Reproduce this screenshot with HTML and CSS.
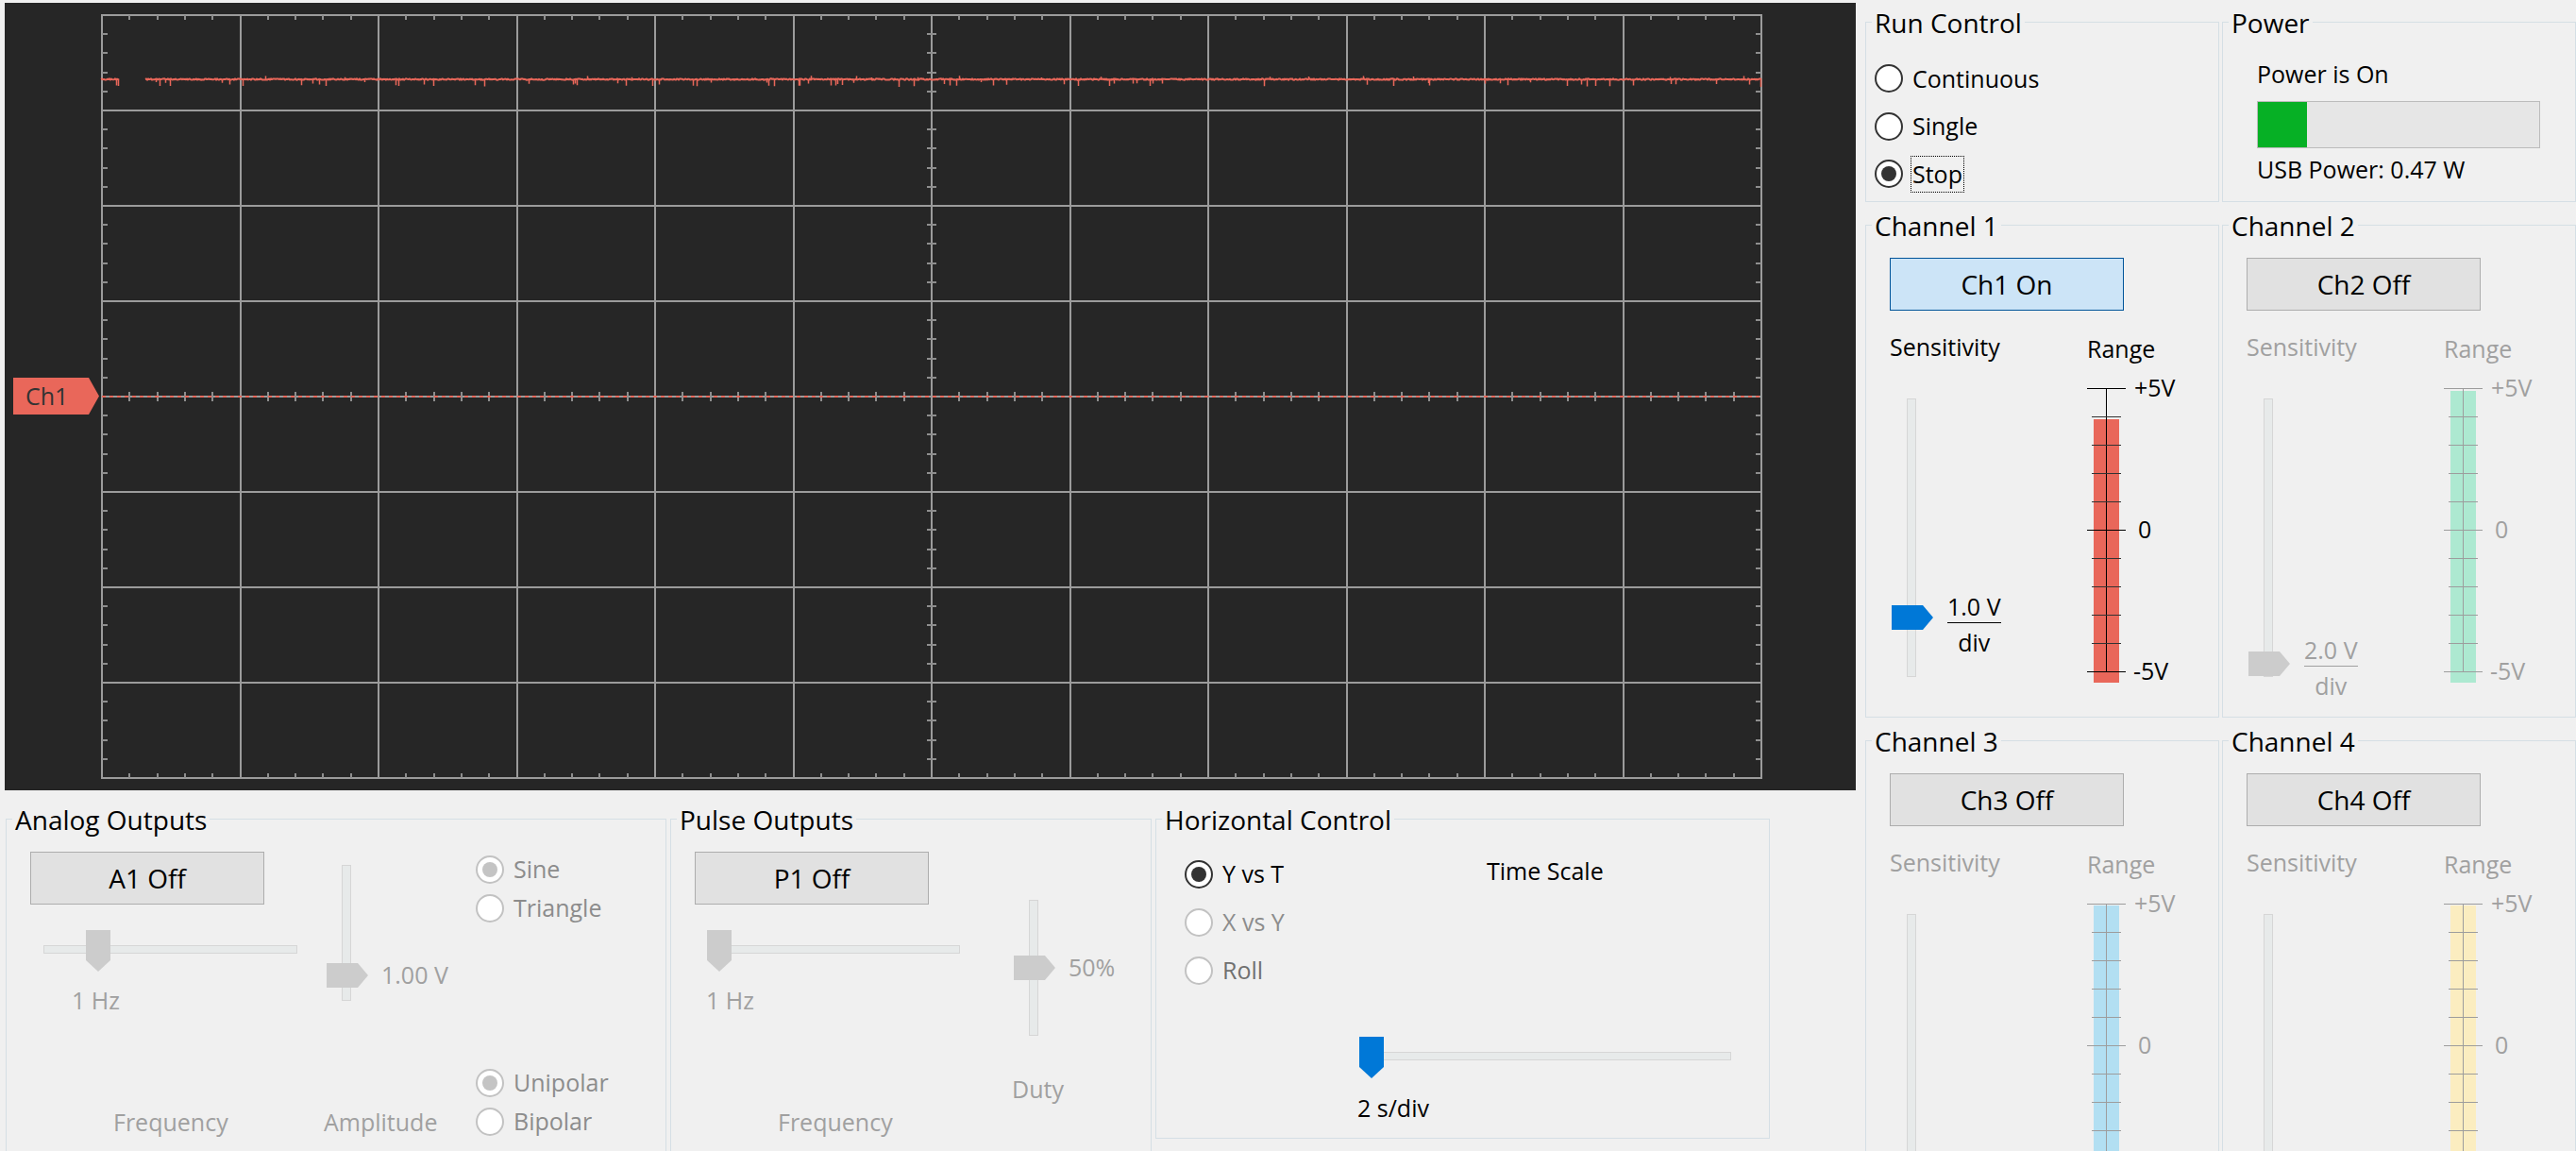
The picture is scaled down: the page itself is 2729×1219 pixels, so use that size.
FILE: index.html
```html
<!DOCTYPE html>
<html lang="en">
<head>
<meta charset="utf-8">
<title>Oscilloscope</title>
<link rel="stylesheet" href="styles.css">
</head>
<body>
<div class="app">
  <div class="left">
    <div class="scope">
      <svg class="scope-svg" width="1961" height="834" viewBox="0 0 1961 834">
        <path id="grid" class="grid" d=""/>
        <path id="ticks" class="ticks" d=""/>
        <path class="zero" d="M103 417H1861"/>
        <path id="trace" class="trace" d=""/>
        <path id="spikes" class="spikes" d=""/>
      </svg>
      <div class="marker">Ch1</div>
    </div>

    <div class="bottom">
      <section class="group g-analog">
        <div class="gtitle">Analog Outputs</div>
        <div class="ao-a">
          <button class="btn">A1 Off</button>
          <div class="hslider ao-hs" style="--pos:45px"><div class="htrack"></div><div class="hthumb"></div></div>
          <div class="txt dis ao-val">1 Hz</div>
          <div class="txt dis ao-cap">Frequency</div>
        </div>
        <div class="ao-b">
          <div class="vslider ao-vs" style="--pos:103px"><div class="vthumb"></div><div class="vval dis">1.00 V</div></div>
          <div class="txt dis ao-amp">Amplitude</div>
        </div>
        <div class="ao-c">
          <div class="radio dis"><span class="rdot on"></span><span class="rtext">Sine</span></div>
          <div class="radio dis"><span class="rdot"></span><span class="rtext">Triangle</span></div>
          <div class="radio dis gap"><span class="rdot on"></span><span class="rtext">Unipolar</span></div>
          <div class="radio dis"><span class="rdot"></span><span class="rtext">Bipolar</span></div>
        </div>
      </section>

      <section class="group g-pulse">
        <div class="gtitle">Pulse Outputs</div>
        <div class="po-a">
          <button class="btn">P1 Off</button>
          <div class="hslider po-hs" style="--pos:0px"><div class="htrack"></div><div class="hthumb"></div></div>
          <div class="txt dis po-val">1 Hz</div>
          <div class="txt dis po-cap">Frequency</div>
        </div>
        <div class="po-b">
          <div class="vslider po-vs" style="--pos:58px"><div class="vthumb"></div><div class="vval dis">50%</div></div>
          <div class="txt dis po-duty">Duty</div>
        </div>
      </section>

      <section class="group g-horiz">
        <div class="gtitle">Horizontal Control</div>
        <div class="hc-a">
          <div class="radio"><span class="rdot on"></span><span class="rtext">Y vs T</span></div>
          <div class="radio dis"><span class="rdot"></span><span class="rtext">X vs Y</span></div>
          <div class="radio dis dim2"><span class="rdot"></span><span class="rtext">Roll</span></div>
        </div>
        <div class="hc-b">
          <div class="txt hc-ts">Time Scale</div>
          <div class="hslider hc-hs" style="--pos:0px"><div class="htrack"></div><div class="hthumb blue"></div></div>
          <div class="txt hc-val">2 s/div</div>
        </div>
      </section>
    </div>
  </div>

  <div class="right">
    <section class="group g-run">
      <div class="gtitle">Run Control</div>
      <div class="radio"><span class="rdot"></span><span class="rtext">Continuous</span></div>
      <div class="radio"><span class="rdot"></span><span class="rtext">Single</span></div>
      <div class="radio focus"><span class="rdot on"></span><span class="rtext">Stop</span></div>
    </section>

    <section class="group g-power">
      <div class="gtitle">Power</div>
      <div class="txt">Power is On</div>
      <div class="pbar"><div class="pfill" style="width:52px"></div></div>
      <div class="txt usb">USB Power: 0.47 W</div>
    </section>

    <section class="group g-ch">
      <div class="gtitle">Channel 1</div>
      <button class="btn on">Ch1 On</button>
      <div class="chbody">
        <div class="sens">
          <div class="txt">Sensitivity</div>
          <div class="vslider ch-vs" style="--pos:218px">
            <div class="vthumb blue"></div>
            <div class="frac"><span class="num">1.0 V</span><span class="rule"></span><span class="den">div</span></div>
          </div>
        </div>
        <div class="rng">
          <div class="txt rlbl">Range</div>
          <svg class="scale sc1" width="115" height="345" viewBox="0 0 115 345">
            <g transform="translate(0 10)">
              <rect class="bar" x="13" y="44" width="27" height="279"/>
              <path class="ln" d="M26.5 11V312"/>
              <path class="ln" d="M6 11.5H47M6 161.5H47M6 311.5H47"/>
              <path class="tk" d="M11 41.5H42M11 71.5H42M11 101.5H42M11 131.5H42M11 191.5H42M11 221.5H42M11 251.5H42M11 281.5H42"/>
              <text x="56" y="20">+5V</text>
              <text x="60" y="170">0</text>
              <text x="55" y="320">-5V</text>
            </g>
          </svg>
        </div>
      </div>
    </section>

    <section class="group g-ch">
      <div class="gtitle">Channel 2</div>
      <button class="btn">Ch2 Off</button>
      <div class="chbody">
        <div class="sens">
          <div class="txt dis">Sensitivity</div>
          <div class="vslider ch-vs" style="--pos:267px">
            <div class="vthumb"></div>
            <div class="frac dis low"><span class="num">2.0 V</span><span class="rule"></span><span class="den">div</span></div>
          </div>
        </div>
        <div class="rng">
          <div class="txt dis rlbl">Range</div>
          <svg class="scale scd sc2" width="115" height="345" viewBox="0 0 115 345">
            <g transform="translate(0 10)">
              <rect class="bar" x="13" y="14" width="27" height="309"/>
              <path class="ln" d="M26.5 11V312"/>
              <path class="ln" d="M6 11.5H47M6 161.5H47M6 311.5H47"/>
              <path class="tk" d="M11 41.5H42M11 71.5H42M11 101.5H42M11 131.5H42M11 191.5H42M11 221.5H42M11 251.5H42M11 281.5H42"/>
              <text x="56" y="20">+5V</text>
              <text x="60" y="170">0</text>
              <text x="55" y="320">-5V</text>
            </g>
          </svg>
        </div>
      </div>
    </section>

    <section class="group g-ch">
      <div class="gtitle">Channel 3</div>
      <button class="btn">Ch3 Off</button>
      <div class="chbody">
        <div class="sens">
          <div class="txt dis">Sensitivity</div>
          <div class="vslider ch-vs"></div>
        </div>
        <div class="rng">
          <div class="txt dis rlbl">Range</div>
          <svg class="scale scd sc3" width="115" height="345" viewBox="0 0 115 345">
            <g transform="translate(0 10)">
              <rect class="bar" x="13" y="13" width="27" height="310"/>
              <path class="ln" d="M26.5 11V312"/>
              <path class="ln" d="M6 11.5H47M6 161.5H47M6 311.5H47"/>
              <path class="tk" d="M11 41.5H42M11 71.5H42M11 101.5H42M11 131.5H42M11 191.5H42M11 221.5H42M11 251.5H42M11 281.5H42"/>
              <text x="56" y="20">+5V</text>
              <text x="60" y="170">0</text>
            </g>
          </svg>
        </div>
      </div>
    </section>

    <section class="group g-ch">
      <div class="gtitle">Channel 4</div>
      <button class="btn">Ch4 Off</button>
      <div class="chbody">
        <div class="sens">
          <div class="txt dis">Sensitivity</div>
          <div class="vslider ch-vs"></div>
        </div>
        <div class="rng">
          <div class="txt dis rlbl">Range</div>
          <svg class="scale scd sc4" width="115" height="345" viewBox="0 0 115 345">
            <g transform="translate(0 10)">
              <rect class="bar" x="13" y="13" width="27" height="310"/>
              <path class="ln" d="M26.5 11V312"/>
              <path class="ln" d="M6 11.5H47M6 161.5H47M6 311.5H47"/>
              <path class="tk" d="M11 41.5H42M11 71.5H42M11 101.5H42M11 131.5H42M11 191.5H42M11 221.5H42M11 251.5H42M11 281.5H42"/>
              <text x="56" y="20">+5V</text>
              <text x="60" y="170">0</text>
            </g>
          </svg>
        </div>
      </div>
    </section>
  </div>
</div>
<script src="script.js"></script>
</body>
</html>
```

FILE: styles.css
```css
* { box-sizing: border-box; }
html { margin: 0; padding: 0; overflow: hidden; width: 2729px; height: 1219px; }
body {
  margin: 0;
  padding: 0;
  width: 2729px;
  height: 1219px;
  overflow: hidden;
  background: #f0f0f0;
  font-family: "Open Sans", "Noto Sans", sans-serif;
  font-size: 25px;
  color: #000;
}

.app { display: flex; align-items: flex-start; height: 1219px; overflow: hidden; }

/* ---------- scope ---------- */
.left { width: 1966px; flex: none; padding: 3px 0 0 5px; }
.scope { position: relative; width: 1961px; height: 834px; background: #262626; }
.scope-svg { display: block; }
.grid { fill: none; stroke: #9b9b9b; stroke-width: 2; }
.ticks { fill: none; stroke: #8e8e8e; stroke-width: 2; }
.zero { fill: none; stroke: #e9675a; stroke-width: 2; stroke-dasharray: 4 4; }
.trace { fill: none; stroke: #e9675a; stroke-width: 2; stroke-linejoin: round; }
.spikes { fill: none; stroke: #e9675a; stroke-width: 1.5; }
.marker {
  position: absolute;
  left: 9px;
  top: 397px;
  width: 91px;
  height: 39px;
  padding-left: 13px;
  background: #e9675a;
  color: #333;
  font-size: 25px;
  line-height: 39px;
  clip-path: polygon(0 0, 80px 0, 91px 50%, 80px 100%, 0 100%);
}

/* ---------- generic ---------- */
.group { position: relative; border: 1px solid #d5dfe5; flex: none; }
.gtitle {
  position: absolute;
  top: -14px;
  left: 6px;
  padding: 0 3px;
  background: #f0f0f0;
  font-size: 28px;
  line-height: 28px;
  white-space: nowrap;
}
.txt { line-height: 34px; white-space: nowrap; }
.dis { color: #a0a0a0; }

.btn {
  display: block;
  width: 248px;
  height: 56px;
  margin: 34px 0 0 25px;
  padding: 0;
  border: 1px solid #adadad;
  background: #e1e1e1;
  font-family: inherit;
  font-size: 28px;
  line-height: 1;
  color: #000;
  appearance: none;
}
.btn.on { background: #cce4f7; border-color: #005499; }

.radio { display: flex; align-items: center; height: 50px; }
.rdot {
  flex: none;
  width: 30px;
  height: 30px;
  border: 2px solid #333;
  border-radius: 50%;
  background: #fff;
  display: flex;
  align-items: center;
  justify-content: center;
}
.rdot.on::after { content: ""; width: 16px; height: 16px; border-radius: 50%; background: #333; }
.rtext {
  margin-left: 8px;
  padding: 0 1px;
  border: 1px dotted transparent;
  line-height: 37px;
  white-space: nowrap;
}
.radio.focus .rtext { border-color: #000; }
.radio.dis .rdot { border-color: #c2c2c2; }
.radio.dis .rdot.on::after { background: #c4c4c4; }
.radio.dis .rtext { color: #8c8c8c; }
.radio.dim2 .rtext { color: #707070; }

/* sliders */
.hslider { position: relative; height: 44px; padding-top: 16px; }
.htrack { height: 9px; background: #e7eaea; border: 1px solid #d6d6d6; }
.hthumb {
  position: absolute;
  top: 0;
  left: var(--pos);
  width: 26px;
  height: 44px;
  background: #cccccc;
  clip-path: polygon(0 0, 100% 0, 100% 32px, 50% 100%, 0 32px);
}
.vslider { position: relative; width: 10px; background: #e7eaea; border: 1px solid #d6d6d6; }
.vthumb {
  position: absolute;
  left: -17px;
  top: var(--pos);
  width: 44px;
  height: 26px;
  background: #cccccc;
  clip-path: polygon(0 0, 33px 0, 44px 50%, 33px 100%, 0 100%);
}
.hthumb.blue, .vthumb.blue { background: #0078d7; }
.vval {
  position: absolute;
  left: 41px;
  top: calc(var(--pos) - 5px);
  line-height: 34px;
  white-space: nowrap;
}
.frac {
  position: absolute;
  left: 42px;
  top: calc(var(--pos) - 14px);
  display: flex;
  flex-direction: column;
  align-items: center;
  white-space: nowrap;
}
.frac.low { top: calc(var(--pos) - 17px); }
.frac .num { line-height: 30px; }
.frac .rule { align-self: stretch; height: 1px; margin-top: 2px; background: currentColor; }
.frac .den { line-height: 30px; margin-top: 5px; }

/* ---------- bottom groups ---------- */
.bottom { display: flex; align-items: flex-start; gap: 4px; margin: 30px 0 0 1px; }
.g-analog { width: 700px; height: 360px; display: flex; align-items: flex-start; }
.g-pulse { width: 510px; height: 360px; display: flex; align-items: flex-start; }
.g-horiz { width: 651px; height: 339px; display: flex; align-items: flex-start; }

.ao-a { width: 336px; flex: none; }
.ao-hs { width: 269px; margin: 27px 0 0 39px; }
.ao-val { margin: 13px 0 0 69px; }
.ao-cap { margin: 95px 0 0 113px; }
.ao-b { width: 161px; flex: none; }
.ao-vs { height: 144px; margin: 48px 0 0 19px; }
.ao-amp { margin-top: 111px; }
.ao-c { padding-top: 32px; }
.ao-c .radio { height: 41px; }
.ao-c .radio.gap { margin-top: 144px; }

.po-a { width: 361px; flex: none; }
.po-hs { width: 268px; margin: 27px 0 0 38px; }
.po-val { margin: 13px 0 0 37px; }
.po-cap { margin: 95px 0 0 113px; }
.po-b { flex: none; }
.po-vs { height: 144px; margin: 85px 0 0 18px; }
.po-duty { margin-top: 39px; }

.hc-a { width: 213px; flex: none; padding: 32px 0 0 30px; }
.hc-a .radio { height: 51px; }
.hc-b { flex: none; }
.hc-ts { margin: 37px 0 0 137px; }
.hc-hs { width: 394px; margin: 159px 0 0 2px; }
.hc-val { margin-top: 14px; }

/* ---------- right panel ---------- */
.right {
  flex: none;
  padding: 23px 0 0 10px;
  display: grid;
  grid-template-columns: 375px 375px;
  grid-template-rows: 191px 522px 450px;
  gap: 24px 3px;
}
.g-run { padding: 34px 0 0 9px; }
.g-run .radio { height: 50.5px; }
.g-power { padding: 37px 0 0 36px; }
.pbar { width: 300px; height: 50px; margin-top: 12px; border: 1px solid #bcbcbc; background: #e6e6e6; }
.pfill { height: 100%; background: #06b025; }
.usb { margin-top: 5px; }

.chbody { display: flex; align-items: flex-start; margin-top: 21px; }
.sens { width: 228px; flex: none; padding-left: 25px; }
.ch-vs { height: 295px; margin: 38px 0 0 18px; }
.rng { flex: none; }
.rlbl { margin: 2px 0 0 6px; }
.scale { display: block; margin-top: 4px; }
.scale text { font-family: "Open Sans", "Noto Sans", sans-serif; font-size: 25px; fill: #000; }
.scale .ln { fill: none; stroke: #000; stroke-width: 1; }
.scale .tk { fill: none; stroke: #333; stroke-width: 1; }
.sc1 .bar { fill: #e9675a; }
.scd .ln, .scd .tk { stroke: #9d9d9d; }
.scd text { fill: #a0a0a0; }
.sc2 .bar { fill: #ade9d1; }
.sc3 .bar { fill: #b2dff2; }
.sc4 .bar { fill: #fbedc0; }
```

FILE: script.js
```js
(function () {
  var L = 103, T = 13, CW = 146.5, RH = 101, NC = 12, NR = 8;
  var W = CW * NC, H = RH * NR, R = L + W, B = T + H;
  var cx = Math.round(L + 6 * CW), cy = T + 4 * RH;
  var g = '', t = '', i, j, k, x, y;

  for (i = 0; i <= NC; i++) {
    x = Math.round(L + i * CW);
    g += 'M' + x + ' ' + (T - 1) + 'V' + (B + 1);
  }
  for (j = 0; j <= NR; j++) {
    y = T + j * RH;
    g += 'M' + (L - 1) + ' ' + y + 'H' + (R + 1);
  }
  for (i = 0; i < NC; i++) {
    for (k = 1; k < 5; k++) {
      x = Math.round(L + i * CW + k * CW / 5);
      t += 'M' + x + ' ' + T + 'v5';
      t += 'M' + x + ' ' + B + 'v-5';
      t += 'M' + x + ' ' + (cy - 5) + 'v10';
    }
  }
  for (j = 0; j < NR; j++) {
    for (k = 1; k < 5; k++) {
      y = Math.round(T + j * RH + k * RH / 5);
      t += 'M' + L + ' ' + y + 'h6';
      t += 'M' + R + ' ' + y + 'h-6';
      t += 'M' + (cx - 5) + ' ' + y + 'h10';
    }
  }
  document.getElementById('grid').setAttribute('d', g);
  document.getElementById('ticks').setAttribute('d', t);

  var seed = 20231;
  function rnd() { seed = (seed * 16807) % 2147483647; return seed / 2147483647; }
  var base = 81, tr = '', sp = '';
  function seg(x0, x1) {
    tr += 'M' + x0 + ' ' + base;
    for (var xx = x0 + 1; xx <= x1; xx++) {
      var yy = base + (rnd() - 0.5) * 1.4;
      tr += 'L' + xx + ' ' + yy.toFixed(1);
      var p = rnd();
      if (p < 0.045) {
        sp += 'M' + xx + '.5 ' + base + 'V' + (base + 3 + rnd() * 5).toFixed(1);
      } else if (p > 0.988) {
        sp += 'M' + xx + '.5 ' + base + 'V' + (base - 2 - rnd() * 2).toFixed(1);
      }
    }
  }
  seg(102, 121);
  sp += 'M120.5 81V88';
  seg(149, 1861);
  sp += 'M1860.5 81V89';
  document.getElementById('trace').setAttribute('d', tr);
  document.getElementById('spikes').setAttribute('d', sp);
})();
```
